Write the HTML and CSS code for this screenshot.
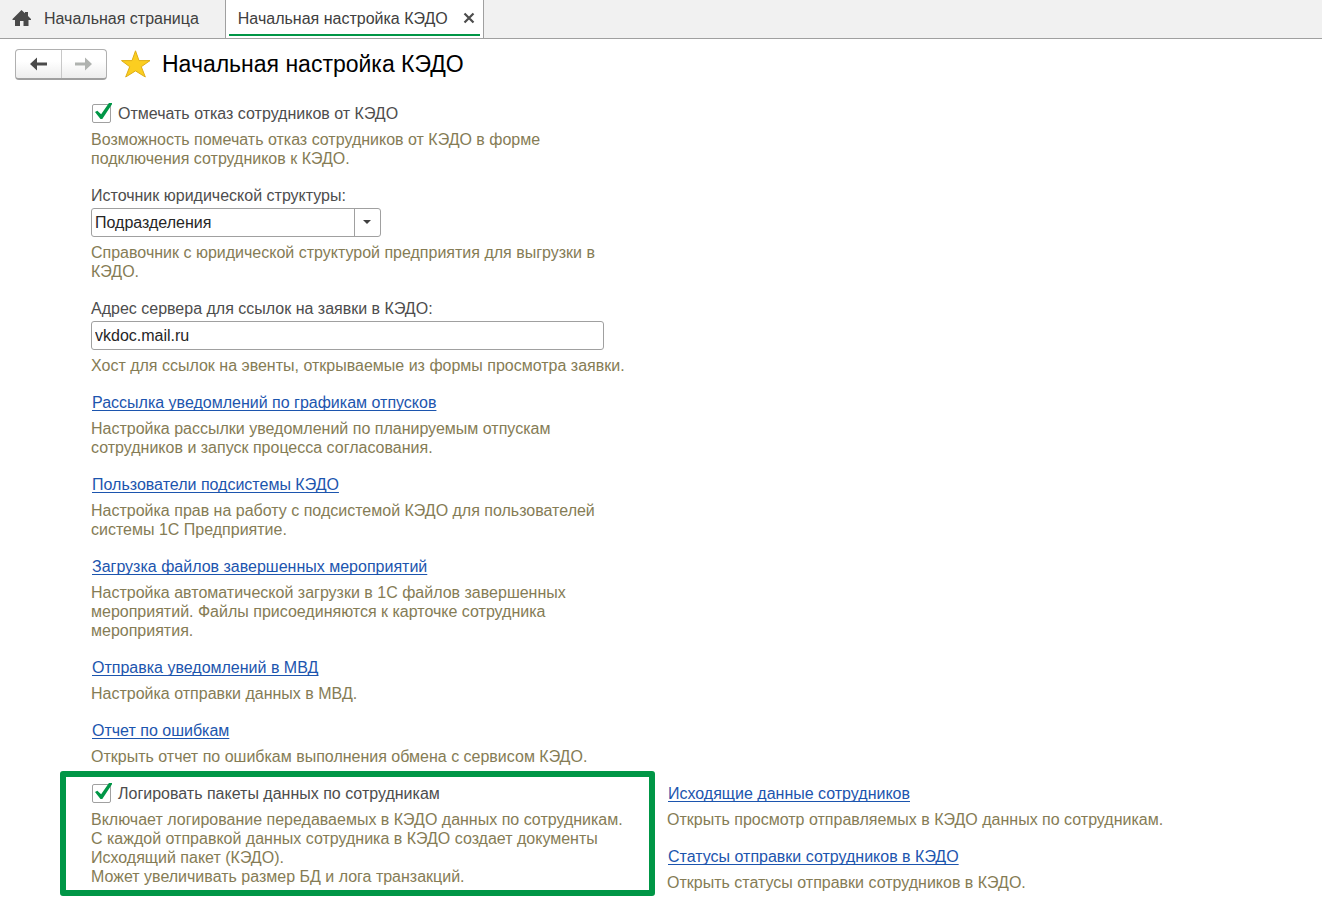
FILE: index.html
```html
<!DOCTYPE html>
<html lang="ru">
<head>
  <meta charset="UTF-8">
  <title>Начальная настройка КЭДО</title>
  <link rel="stylesheet" href="styles.css">
</head>
<body>

  <nav class="tabs">
    <a href="#" class="tab tab-home">
      <svg class="home-icon" width="20" height="18" viewBox="0 0 20 18">
        <path d="M9.500 1 L13 4.300 V3 H16 V7 L19 10 V11 H16.500 V17 H11.500 V12 H8 V17 H3 V11 H0.500 V10 Z" fill="#4a4a4a"/>
      </svg>
      Начальная страница
    </a>
    <div class="tab tab-active">
      <a href="#" class="tab-title">Начальная настройка КЭДО</a>
      <button type="button" class="tab-close" aria-label="Закрыть">
        <svg width="12" height="12" viewBox="0 0 12 12">
          <path d="M1.500 1.500 L10.500 10.500 M10.500 1.500 L1.500 10.500" stroke="#4d4d4d" stroke-width="2.200"/>
        </svg>
      </button>
    </div>
  </nav>

  <header class="page-header">
    <div class="history">
      <button type="button" aria-label="Назад">
        <svg width="18" height="14" viewBox="0 0 18 14">
          <path d="M0 7 L7 0.500 V5.500 H17 V8.500 H7 V13.500 Z" fill="#4a4a4a"/>
        </svg>
      </button>
      <button type="button" aria-label="Вперед" disabled>
        <svg width="18" height="14" viewBox="0 0 18 14">
          <path d="M17 7 L10 0.500 V5.500 H0 V8.500 H10 V13.500 Z" fill="#b0b3b0"/>
        </svg>
      </button>
    </div>
    <button type="button" class="favorite" aria-label="Избранное">
      <svg width="30" height="28" viewBox="0 0 30 28">
        <path d="M14.500 0.800 L18 10.600 H29 L20.300 16.700 L24.300 27 L14.500 20.900 L4.700 27 L8.700 16.700 L0.500 10.600 H11 Z" fill="#fbce20" stroke="#dfae16"/>
      </svg>
    </button>
    <h1>Начальная настройка КЭДО</h1>
  </header>

  <main class="settings">
    <section class="item">
      <label class="check"><input type="checkbox" checked>Отмечать отказ сотрудников от КЭДО</label>
      <p class="hint">Возможность помечать отказ сотрудников от КЭДО в форме подключения сотрудников к КЭДО.</p>
    </section>

    <section class="item field">
      <label for="source">Источник юридической структуры:</label>
      <div class="select-box">
        <select id="source">
          <option>Подразделения</option>
        </select>
        <span class="select-arrow"></span>
      </div>
      <p class="hint">Справочник с юридической структурой предприятия для выгрузки в КЭДО.</p>
    </section>

    <section class="item field">
      <label for="server">Адрес сервера для ссылок на заявки в КЭДО:</label>
      <input type="text" id="server" class="text-box" value="vkdoc.mail.ru">
      <p class="hint">Хост для ссылок на эвенты, открываемые из формы просмотра заявки.</p>
    </section>

    <section class="item">
      <a href="#" class="link">Рассылка уведомлений по графикам отпусков</a>
      <p class="hint">Настройка рассылки уведомлений по планируемым отпускам сотрудников и запуск процесса согласования.</p>
    </section>

    <section class="item">
      <a href="#" class="link">Пользователи подсистемы КЭДО</a>
      <p class="hint">Настройка прав на работу с подсистемой КЭДО для пользователей системы 1С Предприятие.</p>
    </section>

    <section class="item">
      <a href="#" class="link">Загрузка файлов завершенных мероприятий</a>
      <p class="hint">Настройка автоматической загрузки в 1С файлов завершенных мероприятий. Файлы присоединяются к карточке сотрудника мероприятия.</p>
    </section>

    <section class="item">
      <a href="#" class="link">Отправка уведомлений в МВД</a>
      <p class="hint">Настройка отправки данных в МВД.</p>
    </section>

    <section class="item">
      <a href="#" class="link">Отчет по ошибкам</a>
      <p class="hint">Открыть отчет по ошибкам выполнения обмена с сервисом КЭДО.</p>
    </section>
  </main>

  <div class="logging">
    <section class="item highlight">
      <label class="check"><input type="checkbox" checked>Логировать пакеты данных по сотрудникам</label>
      <p class="hint">Включает логирование передаваемых в КЭДО данных по сотрудникам.<br>
        С каждой отправкой данных сотрудника в КЭДО создает документы Исходящий пакет (КЭДО).<br>
        Может увеличивать размер БД и лога транзакций.</p>
    </section>

    <div class="logging-links">
      <section class="item">
        <a href="#" class="link">Исходящие данные сотрудников</a>
        <p class="hint">Открыть просмотр отправляемых в КЭДО данных по сотрудникам.</p>
      </section>
      <section class="item">
        <a href="#" class="link">Статусы отправки сотрудников в КЭДО</a>
        <p class="hint">Открыть статусы отправки сотрудников в КЭДО.</p>
      </section>
    </div>
  </div>

</body>
</html>
```
FILE: styles.css
```css
* {
  box-sizing: border-box;
}

body {
  margin: 0;
  font-family: "Liberation Sans", Arial, sans-serif;
  font-size: 16px;
  line-height: 19px;
  color: #4d4d4d;
  background: #fff;
}

button {
  padding: 0;
  border: none;
  background: none;
  display: flex;
  align-items: center;
  justify-content: center;
}

/* tabs */
.tabs {
  display: flex;
  height: 39px;
  background: #f1f1f1;
  border-bottom: 1px solid #a0a0a0;
}

.tab {
  display: flex;
  align-items: center;
  color: #404040;
  text-decoration: none;
}

.tab-home {
  gap: 12px;
  padding: 0 26px 2px 12px;
}

.tab-active {
  gap: 15px;
  padding: 0 8px 2px 12px;
  background: linear-gradient(#009646, #009646) center 34px / calc(100% - 6px) 2px no-repeat #fff;
  border-left: 1px solid #a0a0a0;
  border-right: 1px solid #a0a0a0;
}

.tab-title {
  color: #404040;
  text-decoration: none;
}

/* header */
.page-header {
  display: flex;
  align-items: flex-start;
  padding: 10px 15px 0;
}

.history {
  display: flex;
  height: 31px;
  border: 1px solid #b0b0b0;
  border-bottom: 2px solid #a0a0a0;
  border-radius: 4px;
  background: linear-gradient(#fff 40%, #ededed);
}

.history button {
  width: 45px;
}

.history button + button {
  border-left: 1px solid #c8c8c8;
}

.favorite {
  margin: 1px 11px 0 14px;
}

h1 {
  margin: 0;
  font-size: 23px;
  font-weight: normal;
  line-height: 30px;
  color: #000;
}

/* settings */
.settings {
  display: flex;
  flex-direction: column;
  gap: 18px;
  max-width: 631px;
  padding: 24px 0 5px 91px;
}

.item {
  display: flex;
  flex-direction: column;
  align-items: flex-start;
  gap: 7px;
}

.field {
  gap: 0;
}

.hint {
  margin: 0;
  color: #857c55;
}

.field .hint {
  margin-top: 6px;
}

.check {
  display: flex;
  align-items: center;
  gap: 7px;
  padding-left: 1px;
}

.check input {
  appearance: none;
  position: relative;
  width: 19px;
  height: 19px;
  margin: 0;
  border: 1px solid #a0a0a0;
  border-radius: 2px;
}

.check input:checked::after {
  content: "";
  position: absolute;
  left: 2px;
  top: -2px;
  width: 17px;
  height: 16px;
  background: #009646;
  clip-path: polygon(0 56%, 14% 48%, 36% 70%, 82% 0, 100% 0, 100% 8%, 43% 100%, 32% 100%);
}

.select-box {
  position: relative;
  width: 290px;
  margin-top: 3px;
}

.select-box select,
.text-box {
  width: 100%;
  height: 29px;
  padding: 0 3px;
  border: 1px solid #a0a0a0;
  border-radius: 3px;
  background: #fff;
  color: #262626;
  font: inherit;
}

.select-box select {
  appearance: none;
}

.select-arrow {
  position: absolute;
  top: 1px;
  right: 1px;
  bottom: 1px;
  width: 26px;
  border-left: 1px solid #a0a0a0;
  pointer-events: none;
}

.select-arrow::after {
  content: "";
  position: absolute;
  left: 8px;
  top: 11px;
  border: 4px solid transparent;
  border-top-color: #404040;
  border-bottom: none;
}

.text-box {
  max-width: 513px;
  margin-top: 3px;
}

.link {
  margin-left: 1px;
  color: #1c55ae;
  text-decoration: underline;
  text-decoration-thickness: 1px;
  text-underline-offset: 2px;
  text-decoration-skip-ink: none;
}

/* logging */
.logging {
  display: flex;
  align-items: flex-start;
  gap: 12px;
  padding-left: 60px;
}

.highlight {
  width: 595px;
  padding: 7px 2px 4px 25px;
  border: 6px solid #009646;
  border-radius: 3px;
}

.logging-links {
  display: flex;
  flex-direction: column;
  gap: 18px;
  padding-top: 13px;
}
```
